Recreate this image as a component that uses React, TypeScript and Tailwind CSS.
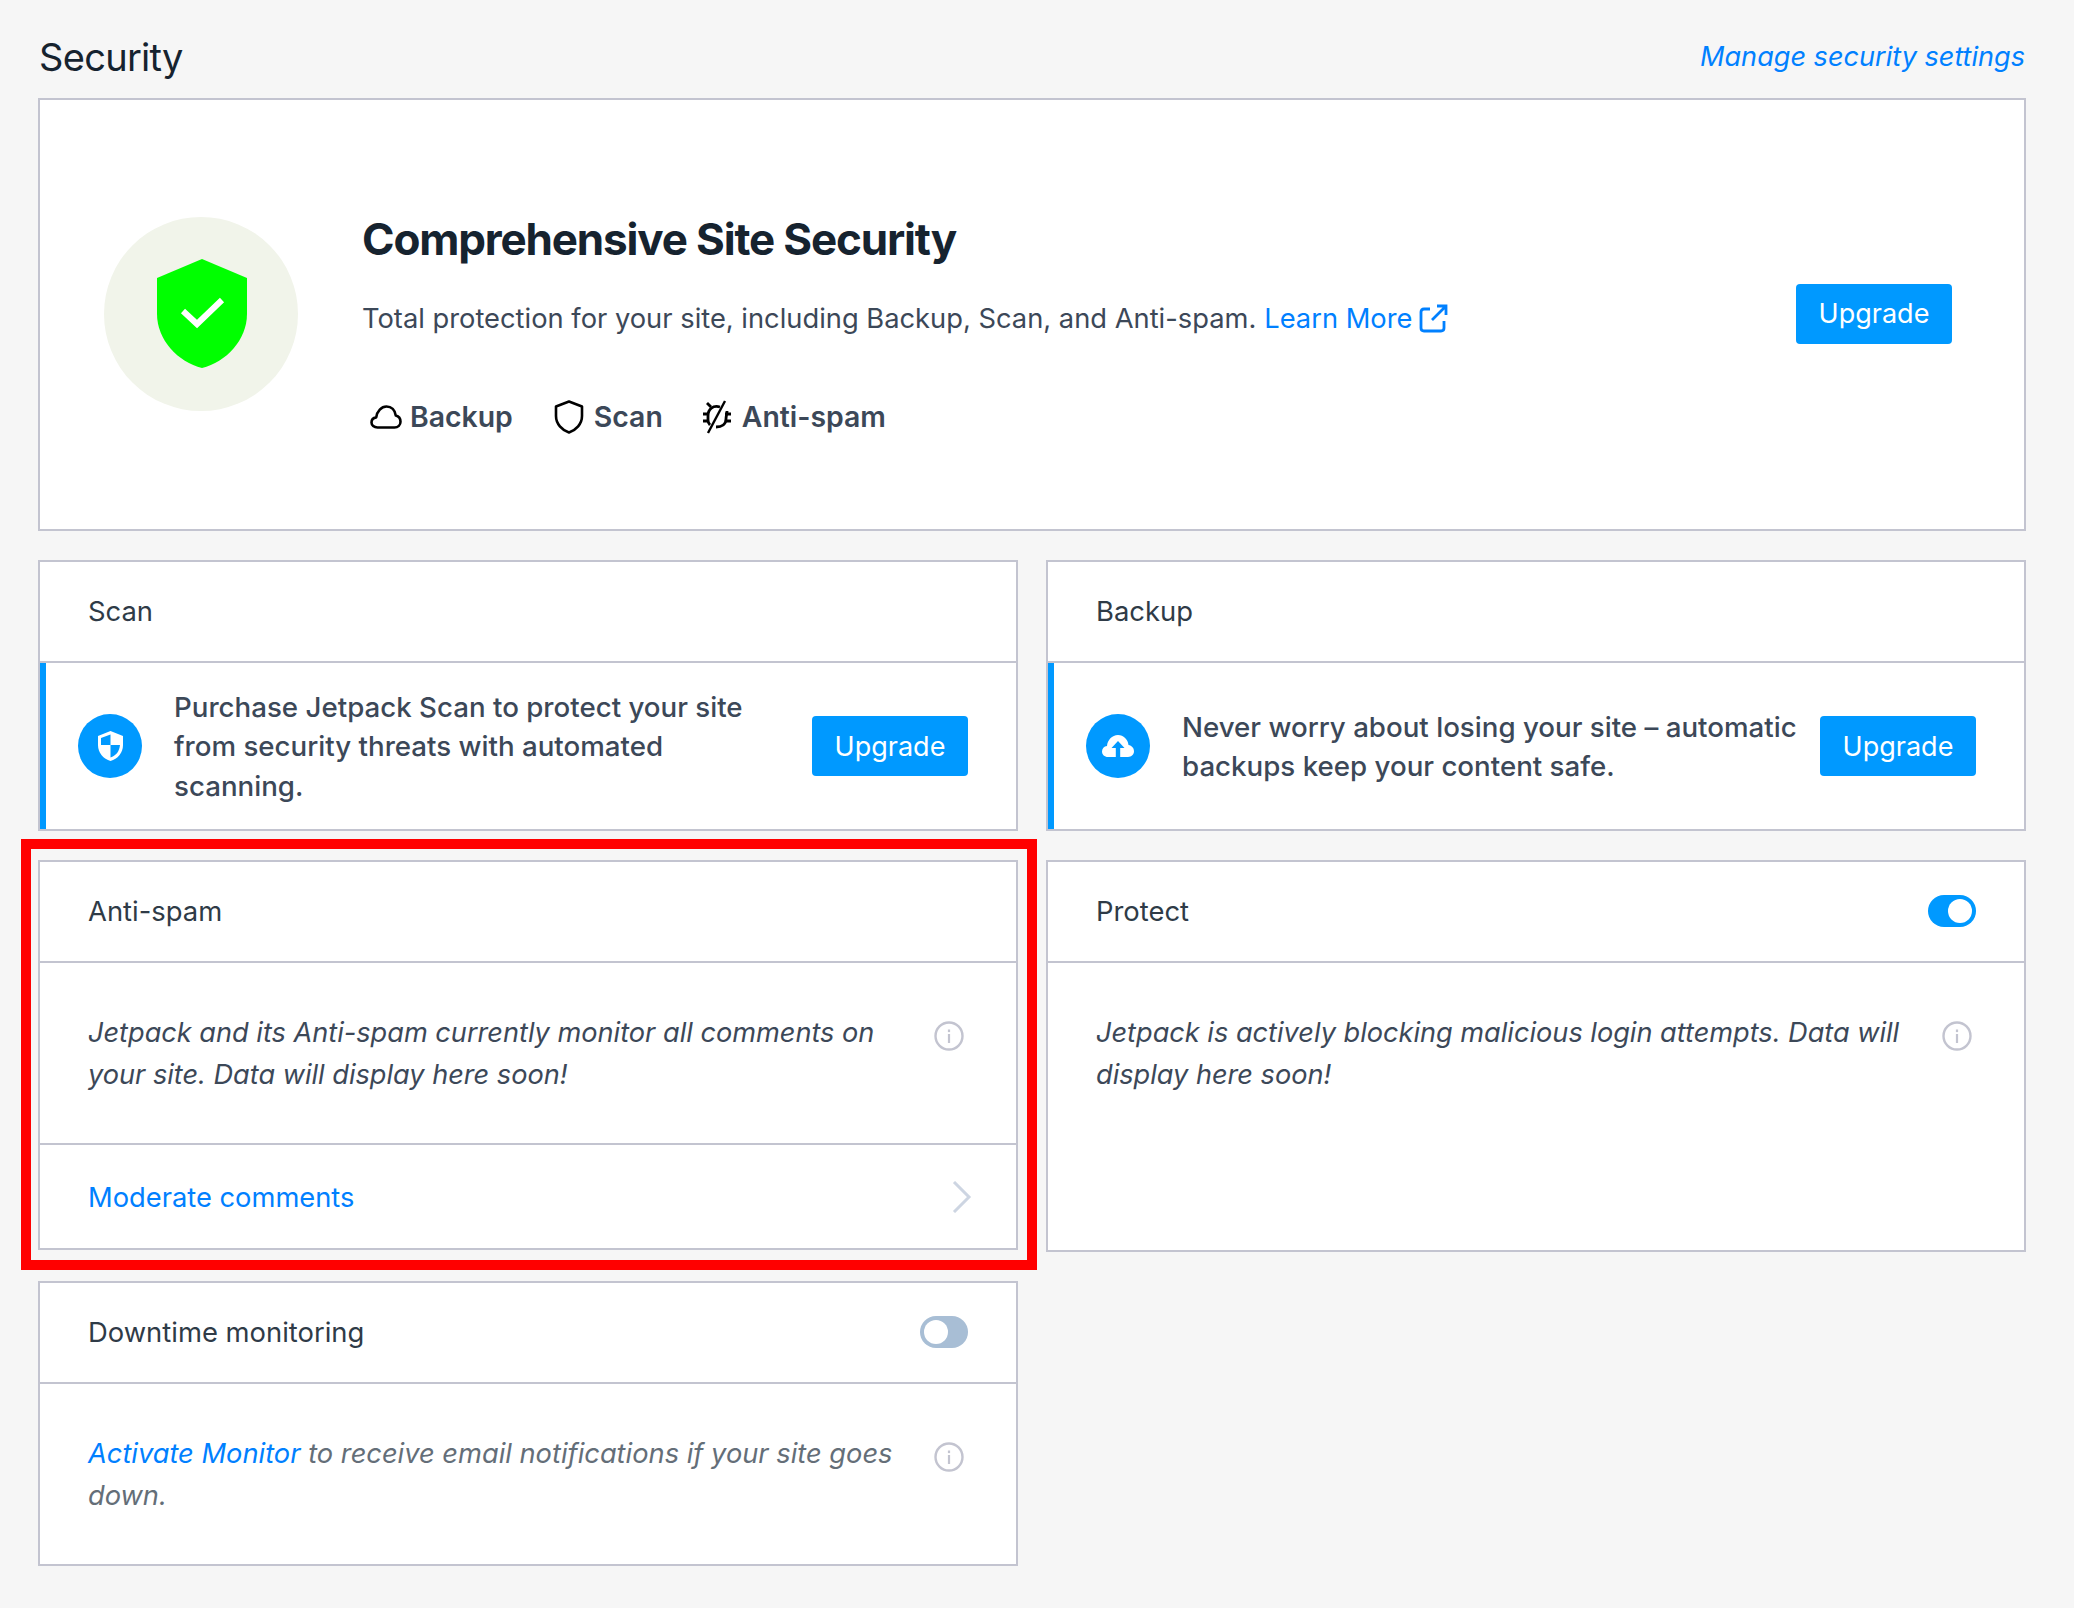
const font = "font-['Inter','Liberation_Sans',sans-serif]";

function HeroShield() {
  return (
    <svg className="ml-[2px]" width="90" height="109" viewBox="0 0 90 109">
      <path d="M45 0L90 19V55C90 81 69 103 45 109C21 103 0 81 0 55V19Z" fill="#00ff00" />
      <path d="M26 52L40 65L65 41" fill="none" stroke="#fff" strokeWidth="6" />
    </svg>
  );
}

function CloudOutline() {
  return (
    <svg width="32" height="24" viewBox="0 0 32 24" fill="none" stroke="#000" strokeWidth="2.6" strokeLinejoin="round">
      <path d="M7.5 22.5C4 22.5 1.5 20.3 1.5 17.5C1.5 14.8 3.5 12.8 6.2 12.4C7 6 11.5 1.5 16.5 1.5C21.5 1.5 25 5.2 25.8 10.6C28.6 11.3 30.5 13.8 30.5 16.8C30.5 20 28 22.5 24.5 22.5Z" />
    </svg>
  );
}

function ShieldOutline() {
  return (
    <svg width="30" height="34" viewBox="0 0 30 34" fill="none" stroke="#000" strokeWidth="2.6">
      <path d="M15 1.5L28 6.5V16C28 24 22 30 15 32.5C8 30 2 24 2 16V6.5Z" strokeLinejoin="round" />
    </svg>
  );
}

function BugOff() {
  return (
    <svg width="30" height="34" viewBox="0 0 30 34" fill="none" stroke="#000" strokeWidth="2.8">
      <path d="M5 3L9 7" />
      <path d="M18 7C11 5 6 9 6 16V20C6 22 7 24 8 25" />
      <path d="M25 11C25 14 24 16 24 19C24 24 20 27 14 27" />
      <path d="M1 14H6M1 21H6M23 14H29M23 21H29" />
      <path d="M23 1L6 33" strokeWidth="2.4" />
    </svg>
  );
}

function ExternalIcon() {
  return (
    <svg width="29" height="29" viewBox="0 0 29 29" fill="none" stroke="#0080ff" strokeWidth="2.8">
      <path d="M11 5H5Q2 5 2 8V24Q2 27 5 27H22Q25 27 25 24V17" />
      <path d="M13 16L26 3M18 2H27V11" />
    </svg>
  );
}

function ShieldSmall() {
  return (
    <svg width="25" height="30" viewBox="0 0 25 30">
      <path d="M12.5 0L25 5V14C25 22 19.5 28 12.5 30C5.5 28 0 22 0 14V5Z" fill="#fff" />
      <path d="M12.5 3.5L3 7V14H12.5Z" fill="#0099ff" />
      <path d="M12.5 14H22C21.5 20.5 17.5 25 12.5 26.5Z" fill="#0099ff" />
    </svg>
  );
}

function CloudUp() {
  return (
    <svg width="32" height="22" viewBox="0 0 32 22">
      <path d="M6 22C2.5 22 0 19.5 0 16.5C0 13.5 2 11.3 5 11C5.5 5 10 0 16 0C21.5 0 26 4.5 26.5 10C29.8 10.6 32 13.2 32 16.3C32 19.6 29.5 22 26 22Z" fill="#fff" />
      <path d="M16 6L9.5 13H13.8V22H18.2V13H22.5Z" fill="#0099ff" />
    </svg>
  );
}

function InfoIcon({ className = "" }: { className?: string }) {
  return (
    <svg className={className} width="30" height="30" viewBox="0 0 30 30" fill="none">
      <circle cx="15" cy="15" r="13.5" stroke="#c3c4d0" strokeWidth="2.4" />
      <rect x="13.9" y="13" width="2.2" height="9" fill="#c3c4d0" />
      <rect x="13.9" y="8.5" width="2.2" height="2.6" fill="#c3c4d0" />
    </svg>
  );
}

function Chevron() {
  return (
    <svg className="mb-[3px]" width="20" height="32" viewBox="0 0 20 32" fill="none" stroke="#cdd5e2" strokeWidth="3">
      <path d="M2 1L17 16L2 31" />
    </svg>
  );
}

function UpgradeButton() {
  return (
    <button className="w-[156px] h-[60px] shrink-0 rounded-[4px] bg-[#0099ff] text-white text-[27px] leading-none">
      Upgrade
    </button>
  );
}

function Toggle({ on }: { on: boolean }) {
  return (
    <div
      className={
        on
          ? "w-[48px] h-[32px] mb-[2px] rounded-full bg-[#0099ff] flex items-center justify-end pr-[4px]"
          : "w-[48px] h-[32px] mb-[2px] rounded-full bg-[#a8bed5] flex items-center justify-start pl-[4px]"
      }
    >
      <div className="w-[24px] h-[24px] rounded-full bg-white" />
    </div>
  );
}

function CardHeader({ title, on }: { title: string; on?: boolean }) {
  return (
    <div className="h-[101px] shrink-0 flex items-center justify-between pl-[48px] pr-[48px] border-b-2 border-[#c3c4d0] text-[27.4px] text-[#2f3b47]">
      <span>{title}</span>
      {on !== undefined && <Toggle on={on} />}
    </div>
  );
}

function Card({ children }: { children: React.ReactNode }) {
  return <div className="flex flex-col bg-white border-2 border-[#c3c4d0]">{children}</div>;
}

function Notice({ icon, children, gap }: { icon: React.ReactNode; children: React.ReactNode; gap: string }) {
  return (
    <div className="h-[166px] flex items-center border-l-[6px] border-[#0099ff] pl-[32px] pr-[48px]">
      <div className="w-[64px] h-[64px] rounded-full bg-[#0099ff] flex items-center justify-center shrink-0">{icon}</div>
      <div className={gap}>{children}</div>
      <UpgradeButton />
    </div>
  );
}

function Body({ children }: { children: React.ReactNode }) {
  return (
    <div className="flex items-start justify-between pl-[48px] pr-[52px] pt-[49px] pb-[47px]">
      <p className="italic text-[27.15px] leading-[42px] w-[830px] text-[#3c4858]">{children}</p>
      <InfoIcon className="mt-[9px] shrink-0" />
    </div>
  );
}

export default function App() {
  return (
    <div className={`${font} min-h-screen bg-[#f6f6f6] pl-[38px] pr-[48px] pt-[32px]`}>
      <div className="flex items-center justify-between pb-[17px] h-[66px] pl-[1px]">
        <h1 className="text-[38px] leading-[50px] text-[#16232f] tracking-[-0.7px]">Security</h1>
        <a className="italic text-[27.1px] text-[#0080ff] mr-[1px] mt-[1px]">Manage security settings</a>
      </div>

      <div className="h-[433px] bg-white border-2 border-[#c3c4d0] flex items-center pl-[64px] pr-[72px] pb-[2px]">
        <div className="w-[194px] h-[194px] rounded-full bg-[#f1f4ea] flex items-center justify-center shrink-0">
          <HeroShield />
        </div>
        <div className="ml-[64px] flex-1 pt-[22px]">
          <h2 className="text-[44px] leading-[56px] font-bold text-[#16232f] tracking-[-1.16px]">Comprehensive Site Security</h2>
          <p className="mt-[31px] text-[27.3px] leading-[42px] text-[#3c4858] flex items-center">
            <span>Total protection for your site, including Backup, Scan, and Anti-spam.</span>
            <a className="ml-[8px] text-[#0080ff]">Learn More</a>
            <span className="ml-[7px]">
              <ExternalIcon />
            </span>
          </p>
          <div className="mt-[56px] flex items-center text-[28.4px] font-semibold text-[#3c4858] pl-[8px]">
            <CloudOutline />
            <span className="ml-[8px]">Backup</span>
            <span className="ml-[41px]"><ShieldOutline /></span>
            <span className="ml-[10px]">Scan</span>
            <span className="ml-[39px]"><BugOff /></span>
            <span className="ml-[10px]">Anti-spam</span>
          </div>
        </div>
        <UpgradeButton />
      </div>

      <div className="grid grid-cols-2 gap-x-[28px] gap-y-[29px] mt-[29px]">
        <Card>
          <CardHeader title="Scan" />
          <Notice icon={<ShieldSmall />} gap="ml-[32px] pt-[2px] flex-1 text-[27.7px] leading-[39.5px] font-medium text-[#3c4858] pr-[30px]">
            Purchase Jetpack Scan to protect your site from security threats with automated scanning.
          </Notice>
        </Card>
        <Card>
          <CardHeader title="Backup" />
          <Notice icon={<CloudUp />} gap="ml-[32px] pt-[2px] flex-1 text-[27.7px] leading-[39.5px] font-medium text-[#3c4858] pr-[10px]">
            Never worry about losing your site – automatic backups keep your content safe.
          </Notice>
        </Card>

        <div className="relative pb-[2px]">
          <div className="flex flex-col bg-white border-2 border-[#c3c4d0]">
            <CardHeader title="Anti-spam" />
            <div className="border-b-2 border-[#c3c4d0]">
              <Body>Jetpack and its Anti-spam currently monitor all comments on your site. Data will display here soon!</Body>
            </div>
            <div className="h-[103px] flex items-center justify-between pl-[48px] pr-[44px] pt-[3px] text-[27.3px] text-[#0080ff]">
              <a>Moderate comments</a>
              <Chevron />
            </div>
          </div>
          <div className="absolute -left-[17px] -right-[19px] -top-[21px] -bottom-[18px] border-[10px] border-[#ff0000] pointer-events-none" />
        </div>

        <Card>
          <CardHeader title="Protect" on={true} />
          <Body>Jetpack is actively blocking malicious login attempts. Data will display here soon!</Body>
        </Card>

        <Card>
          <CardHeader title="Downtime monitoring" on={false} />
          <div className="flex items-start justify-between pl-[48px] pr-[52px] pt-[49px] pb-[47px]">
            <p className="italic text-[27.25px] leading-[42px] w-[830px] text-[#646e78]">
              <a className="text-[#0080ff]">Activate Monitor</a> to receive email notifications if your site goes down.
            </p>
            <InfoIcon className="mt-[9px] shrink-0" />
          </div>
        </Card>
      </div>
    </div>
  );
}
